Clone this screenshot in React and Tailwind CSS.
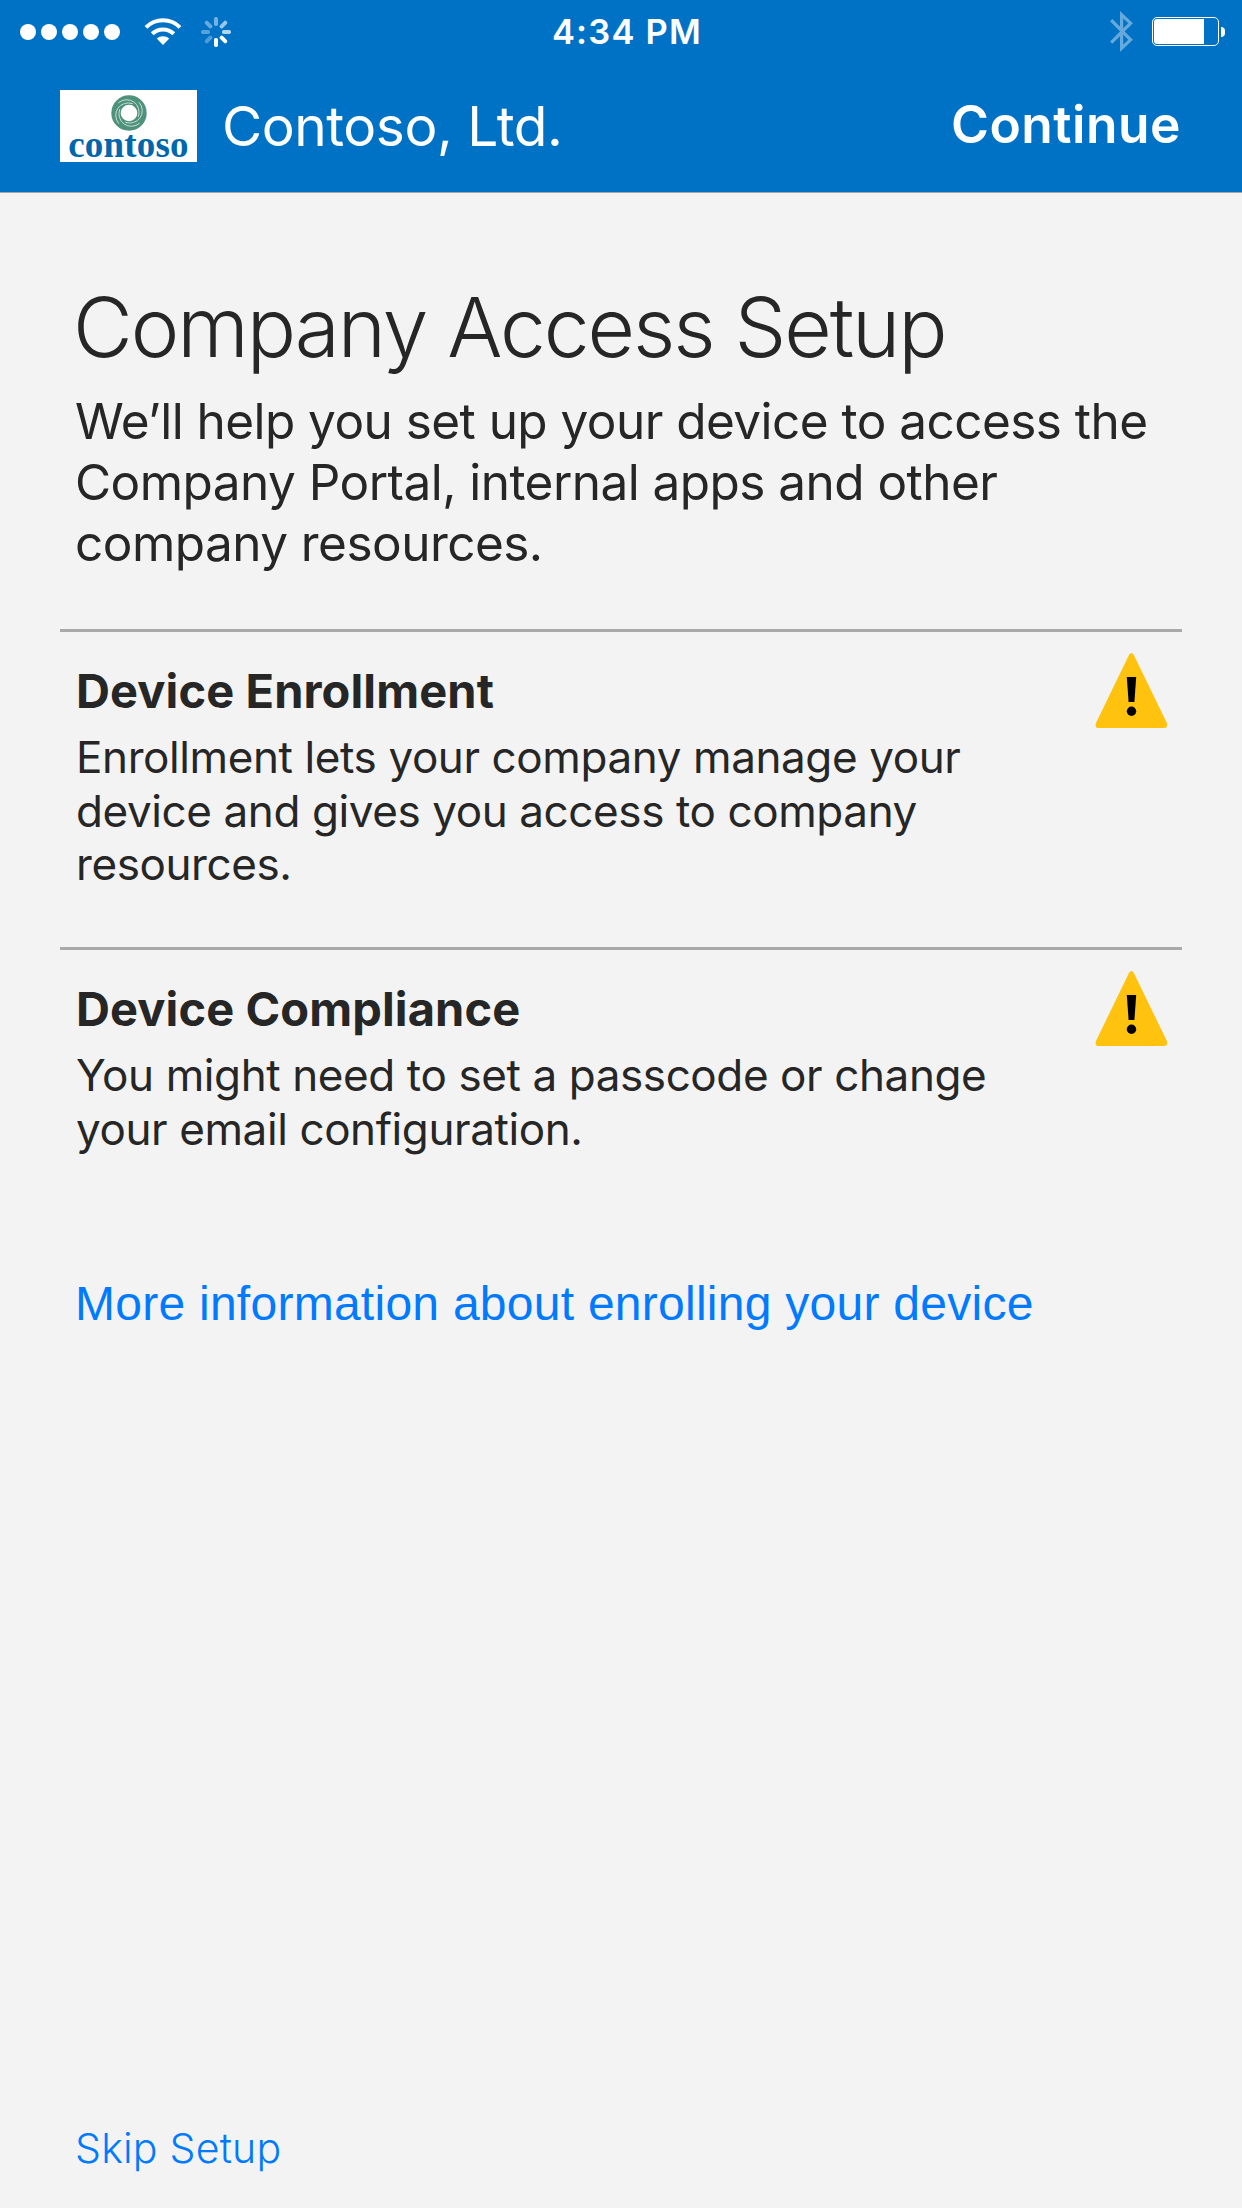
import React from "react";

function WifiIcon() {
  return (
    <svg className="h-[28px] w-[38px]" viewBox="0 0 38 28" fill="none" stroke="#fff">
      <path d="M2 9.3A24.2 24.2 0 0 1 36 9.3" strokeWidth="4" />
      <path d="M8.2 15.8A15.6 15.6 0 0 1 29.8 15.8" strokeWidth="4" />
      <path d="M19 27L12.7 20.6A9.4 9.4 0 0 1 25.3 20.6Z" fill="#fff" stroke="none" />
    </svg>
  );
}

function Spinner() {
  const spokes = [0.45, 0.6, 0.7, 1, 1, 0.3, 0.35, 0.4];
  return (
    <svg className="h-[30px] w-[30px]" viewBox="-15 -15 30 30">
      {spokes.map((opacity, i) => (
        <rect key={i} x="-2" y="-15" width="4" height="9" rx="1.7" fill="#fff" opacity={opacity} transform={`rotate(${i * 45})`} />
      ))}
    </svg>
  );
}

function BluetoothIcon() {
  return (
    <svg className="h-[41px] w-[24px]" viewBox="0 0 24 41" fill="none" stroke="#66aadd" strokeWidth="3.2">
      <path d="M1.2 9.2L20.6 28.8L11.6 37.2V3.8L20.6 12.2L1.2 31.6" />
    </svg>
  );
}

function Battery() {
  return (
    <div className="flex items-center gap-[2px]">
      <div className="h-[29px] w-[67px] rounded-[5px] border border-white p-px">
        <div className="h-full w-[50px] rounded-l-[3px] bg-white" />
      </div>
      <div className="h-[10px] w-[4px] rounded-r-full bg-white" />
    </div>
  );
}

function StatusBar() {
  return (
    <div className="grid h-[61px] grid-cols-3 items-center pr-[17px] pl-[20px]">
      <div className="flex items-center">
        <div className="flex gap-[5px]">
          {[0, 1, 2, 3, 4].map((i) => (
            <span key={i} className="size-[16px] rounded-full bg-white" />
          ))}
        </div>
        <div className="ml-[24px] flex">
          <WifiIcon />
        </div>
        <div className="ml-[19px] flex">
          <Spinner />
        </div>
      </div>
      <div className="pt-px pl-[9px] text-center text-[34.5px] leading-[62px] font-semibold tracking-[1.22px]">4:34 PM</div>
      <div className="flex items-center justify-end gap-[18px]">
        <BluetoothIcon />
        <Battery />
      </div>
    </div>
  );
}

function Logo() {
  return (
    <div className="flex h-[72px] w-[137px] flex-col items-center bg-white">
      <svg className="mt-[5px] h-[36px] w-[36px] shrink-0" viewBox="-18 -18 36 36" fill="none">
        <circle r="13" stroke="#4f927c" strokeWidth="9.4" />
        <g stroke="#c3dcd3" strokeWidth="0.9" strokeLinecap="round">
          {[20, 110, 200, 290].map((a) => (
            <path key={a} d="M-6.25 13.3A12.5 12.5 0 0 1 0 -10" transform={`rotate(${a})`} />
          ))}
        </g>
      </svg>
      <span className="-mt-[6px] font-['Liberation_Serif',serif] text-[37px] leading-[40px] font-bold tracking-[0.2px] text-[#0067ac]">
        contoso
      </span>
    </div>
  );
}

function WarningIcon() {
  return (
    <svg className="h-[75px] w-[73px] shrink-0" viewBox="0 0 73 75">
      <path d="M34.2 1.6Q36.4 -1.4 38.6 1.6L71.6 69.5Q73.4 75 69 75H4Q-0.6 75 1.2 69.5Z" fill="#ffc20e" />
      <path d="M31.8 24H41.2L39.4 49H33.6Z" fill="#000" />
      <circle cx="36.5" cy="58.3" r="4.7" fill="#000" />
    </svg>
  );
}

function Step({ title, lines }) {
  return (
    <section className="flex h-[318px] items-start justify-between border-t-[3px] border-[#a9a9a9] pr-[14px] pl-[16px]">
      <div className="pt-[29px]">
        <h2 className="text-[47px] leading-[60px] font-bold tracking-[0.1px]">{title}</h2>
        <p className="mt-[10px] text-[44px] leading-[53.6px] tracking-[-0.4px] whitespace-nowrap">
          {lines.map((line) => (
            <span key={line} className="block">{line}</span>
          ))}
        </p>
      </div>
      <div className="mt-[21px] flex">
        <WarningIcon />
      </div>
    </section>
  );
}

export default function App() {
  return (
    <div className="flex h-[2208px] w-[1242px] flex-col bg-[#f3f3f3] font-[Inter,sans-serif] text-[#262626]">
      <header className="h-[193px] border-b border-[#a5a5a8] bg-[#0072c6] text-white">
        <StatusBar />
        <div className="flex items-start pt-[29px] pr-[61px] pl-[60px]">
          <Logo />
          <div className="ml-[25px] text-[55px] leading-[72px] font-[370] tracking-[-0.45px]">Contoso, Ltd.</div>
          <button className="-mt-[2px] ml-auto text-[51.5px] leading-[72px] font-semibold tracking-[0.5px]">Continue</button>
        </div>
      </header>

      <main className="flex grow flex-col px-[60px] pt-[85px]">
        <div className="h-[351px] pl-[15px] whitespace-nowrap">
          <h1 className="-ml-[2px] text-[82px] leading-[100px] font-[320] tracking-[-2.06px]">Company Access Setup</h1>
          <p className="mt-[13px] text-[49.5px] leading-[61px] tracking-[-0.54px]">
            <span className="block">We’ll help you set up your device to access the</span>
            <span className="block">Company Portal, internal apps and other</span>
            <span className="block">company resources.</span>
          </p>
        </div>
        <Step
          title="Device Enrollment"
          lines={["Enrollment lets your company manage your", "device and gives you access to company", "resources."]}
        />
        <Step
          title="Device Compliance"
          lines={["You might need to set a passcode or change", "your email configuration."]}
        />
        <a className="mt-[9px] pl-[15px] font-['Liberation_Sans',sans-serif] text-[48px] leading-[60px] tracking-[0.26px] text-[#007aff]">
          More information about enrolling your device
        </a>
        <a className="mt-auto mb-[35px] pl-[15px] text-[41px] leading-[50px] font-[330] tracking-[0.23px] text-[#007aff]">Skip Setup</a>
      </main>
    </div>
  );
}
